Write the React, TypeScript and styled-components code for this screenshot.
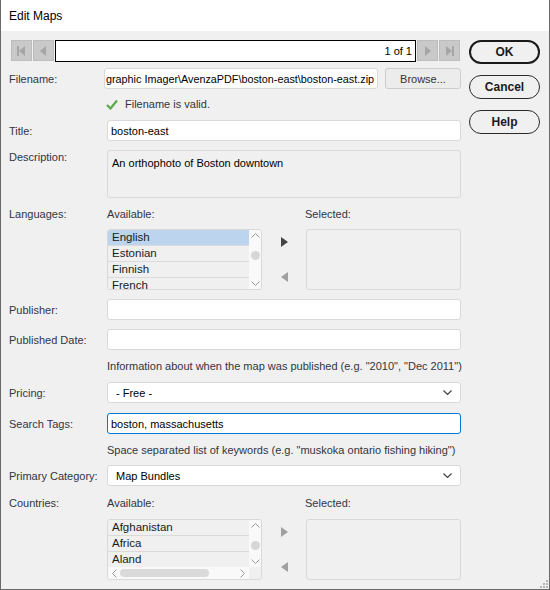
import React from "react";
import styled, { createGlobalStyle } from "styled-components";

const GlobalStyle = createGlobalStyle`
  * { box-sizing: border-box; }
  body {
    margin: 0;
    font-family: "Liberation Sans", Arial, sans-serif;
    font-size: 11px;
    color: #333;
  }
`;

const Window = styled.div`
  position: relative;
  width: 550px;
  height: 590px;
  background: #f0f0f0;
  border: 1px solid #6a6a6a;
  border-top: none;
  display: flex;
  flex-direction: column;
`;

const TitleBar = styled.div`
  height: 31px;
  background: #fff;
  display: flex;
  align-items: center;
  padding-left: 8px;
  font-size: 12px;
  color: #000;
`;

const Body = styled.div`
  display: flex;
  padding-top: 9px;
`;

const Main = styled.div`
  width: 460px;
  padding-left: 8px;
  display: flex;
  flex-direction: column;
`;

const Side = styled.div`
  width: 71px;
  margin-left: 8px;
  display: flex;
  flex-direction: column;
  gap: 11px;
`;

const DialogButton = styled.button<{ $default?: boolean }>`
  height: 24px;
  width: 100%;
  border-radius: 12px;
  background: #f0f0f0;
  border: ${(p) => (p.$default ? "2px solid #1a1a1a" : "1px solid #2a2a2a")};
  font-family: "Liberation Sans", Arial, sans-serif;
  font-weight: bold;
  font-size: 12px;
  color: #1a1a1a;
  padding: 0;
`;

const NavRow = styled.div`
  display: flex;
  margin-left: 2px;
  margin-right: 1px;
  height: 22px;
`;

const NavButton = styled.div`
  width: 21px;
  height: 21px;
  background: #c9c9c9;
  border: 1px solid #bdbdbd;
  margin-right: 1px;
  display: flex;
  align-items: center;
  justify-content: center;
  &:last-child {
    margin-right: 0;
  }
`;

const Counter = styled.div`
  flex: 1;
  height: 22px;
  background: #fff;
  border: 1px solid #000;
  margin-right: 1px;
  display: flex;
  align-items: center;
  justify-content: flex-end;
  padding-right: 3px;
  color: #000;
`;

const Row = styled.div<{ $mt: number; $top?: boolean }>`
  display: flex;
  align-items: ${(p) => (p.$top ? "flex-start" : "center")};
  margin-top: ${(p) => p.$mt}px;
`;

const Label = styled.div`
  width: 98px;
  flex-shrink: 0;
  line-height: 14px;
  color: #33343f;
`;

const Hint = styled.div`
  line-height: 14px;
  color: #33343f;
  white-space: nowrap;
`;

const Input = styled.div<{ $focus?: boolean }>`
  width: 354px;
  height: 21px;
  background: #fff;
  border: 1px solid ${(p) => (p.$focus ? "#0078d7" : "#d9d9d9")};
  border-radius: 3px;
  display: flex;
  align-items: center;
  padding-left: 3px;
  color: #000;
  white-space: nowrap;
  overflow: hidden;
`;

const FileInput = styled(Input)`
  width: 274px;
  margin-left: -3px;
  padding-left: 1px;
  font-size: 10.8px;
`;

const BrowseButton = styled.div`
  width: 76px;
  height: 21px;
  margin-left: 7px;
  background: #ececec;
  border: 1px solid #cdcdcd;
  border-radius: 3px;
  display: flex;
  align-items: center;
  justify-content: center;
  color: #333;
`;

const TextArea = styled.div`
  width: 354px;
  height: 48px;
  background: #f0f0f0;
  border: 1px solid #d9d9d9;
  border-radius: 3px;
  padding: 5px 4px;
  line-height: 14px;
  color: #000;
`;

const Select = styled(Input)`
  justify-content: space-between;
  padding: 0 8px;
`;

const ValidRow = styled.div`
  display: flex;
  align-items: center;
  height: 16px;
  margin-top: 7px;
  padding-left: 97px;
  gap: 7px;
  color: #33343f;
`;

const AvailableHead = styled.div`
  width: 198px;
  line-height: 14px;
  color: #33343f;
`;

const ListBox = styled.div<{ $hscroll?: boolean }>`
  width: 155px;
  height: 61px;
  border: 1px solid #d9d9d9;
  border-radius: 3px;
  background: #f0f0f0;
  overflow: hidden;
  display: grid;
  grid-template-columns: 1fr 12px;
  grid-template-rows: ${(p) => (p.$hscroll ? "1fr 12px" : "1fr")};
`;

const Items = styled.div`
  overflow: hidden;
`;

const Item = styled.div<{ $selected?: boolean }>`
  height: 16px;
  line-height: 15px;
  padding-left: 4px;
  color: #1a1a1a;
  background: ${(p) => (p.$selected ? "#bcd4ee" : "#f0f0f0")};
  border-bottom: 1px solid #dadada;
  font-size: 11.5px;
`;

const VScroll = styled.div`
  background: #f9f9f9;
  display: flex;
  flex-direction: column;
  align-items: center;
  padding-top: 3px;
`;

const Thumb = styled.div`
  width: 9px;
  height: 9px;
  border-radius: 50%;
  background: #d6d6d6;
  margin-top: 13px;
`;

const ScrollEnd = styled.div`
  margin-top: auto;
  padding-bottom: 3px;
  display: flex;
`;

const HScroll = styled.div`
  background: #f9f9f9;
  display: flex;
  align-items: center;
  padding: 0 4px;
`;

const HThumb = styled.div`
  width: 89px;
  height: 8px;
  border-radius: 4px;
  background: #dadada;
  margin-left: 3px;
`;

const HEnd = styled.div`
  margin-left: auto;
  display: flex;
`;

const Corner = styled.div`
  background: #f0f0f0;
`;

const ArrowCol = styled.div`
  width: 44px;
  height: 61px;
  display: flex;
  flex-direction: column;
  align-items: center;
  padding-top: 8px;
  gap: 25px;
`;

const SelectedBox = styled.div`
  width: 155px;
  height: 61px;
  border: 1px solid #d9d9d9;
  border-radius: 3px;
  background: #f0f0f0;
`;

const Grip = styled.svg`
  position: absolute;
  right: 1px;
  bottom: 1px;
`;

const Tri = ({ dir, color }: { dir: "l" | "r"; color: string }) => (
  <svg width="7" height="10" viewBox="0 0 7 10">
    <polygon points={dir === "r" ? "0,0 7,5 0,10" : "7,0 0,5 7,10"} fill={color} />
  </svg>
);

const NavIcon = ({ kind }: { kind: "first" | "prev" | "next" | "last" }) => (
  <svg width="11" height="10" viewBox="0 0 11 10">
    {kind === "first" && (
      <>
        <rect x="1" y="0" width="2" height="10" fill="#a6a6a6" />
        <polygon points="9,0 3,5 9,10" fill="#a6a6a6" />
      </>
    )}
    {kind === "prev" && <polygon points="8,0 2,5 8,10" fill="#a6a6a6" />}
    {kind === "next" && <polygon points="3,0 9,5 3,10" fill="#a6a6a6" />}
    {kind === "last" && (
      <>
        <polygon points="2,0 8,5 2,10" fill="#a6a6a6" />
        <rect x="8" y="0" width="2" height="10" fill="#a6a6a6" />
      </>
    )}
  </svg>
);

const Chevron = ({ up }: { up?: boolean }) => (
  <svg width="9" height="5" viewBox="0 0 9 5">
    <polyline
      points={up ? "0.5,4.5 4.5,0.5 8.5,4.5" : "0.5,0.5 4.5,4.5 8.5,0.5"}
      fill="none"
      stroke="#9a9a9a"
      strokeWidth="1"
    />
  </svg>
);

const SideChevron = ({ right }: { right?: boolean }) => (
  <svg width="5" height="9" viewBox="0 0 5 9">
    <polyline
      points={right ? "0.5,0.5 4.5,4.5 0.5,8.5" : "4.5,0.5 0.5,4.5 4.5,8.5"}
      fill="none"
      stroke="#9a9a9a"
      strokeWidth="1"
    />
  </svg>
);

const DropChevron = () => (
  <svg width="9" height="5" viewBox="0 0 9 5">
    <polyline points="0.5,0.5 4.5,4.5 8.5,0.5" fill="none" stroke="#444" strokeWidth="1.2" />
  </svg>
);

function PickList({
  items,
  selected,
  hscroll,
}: {
  items: string[];
  selected?: string;
  hscroll?: boolean;
}) {
  return (
    <ListBox $hscroll={hscroll}>
      <Items>
        {items.map((it) => (
          <Item key={it} $selected={it === selected}>
            {it}
          </Item>
        ))}
      </Items>
      <VScroll>
        <Chevron up />
        <Thumb />
        <ScrollEnd>
          <Chevron />
        </ScrollEnd>
      </VScroll>
      {hscroll && (
        <>
          <HScroll>
            <SideChevron />
            <HThumb />
            <HEnd>
              <SideChevron right />
            </HEnd>
          </HScroll>
          <Corner />
        </>
      )}
    </ListBox>
  );
}

export default function App() {
  return (
    <Window>
      <GlobalStyle />
      <TitleBar>Edit Maps</TitleBar>
      <Body>
        <Main>
          <NavRow>
            <NavButton>
              <NavIcon kind="first" />
            </NavButton>
            <NavButton>
              <NavIcon kind="prev" />
            </NavButton>
            <Counter>1 of 1</Counter>
            <NavButton>
              <NavIcon kind="next" />
            </NavButton>
            <NavButton>
              <NavIcon kind="last" />
            </NavButton>
          </NavRow>

          <Row $mt={6}>
            <Label>Filename:</Label>
            <FileInput>graphic Imager\AvenzaPDF\boston-east\boston-east.zip</FileInput>
            <BrowseButton>Browse...</BrowseButton>
          </Row>

          <ValidRow>
            <svg width="12" height="11" viewBox="0 0 12 11">
              <polyline
                points="1,6 4.5,9.5 11,1.5"
                fill="none"
                stroke="#5aa846"
                strokeWidth="2.2"
              />
            </svg>
            <span>Filename is valid.</span>
          </ValidRow>

          <Row $mt={8}>
            <Label>Title:</Label>
            <Input>boston-east</Input>
          </Row>

          <Row $mt={9} $top>
            <Label>Description:</Label>
            <TextArea>An orthophoto of Boston downtown</TextArea>
          </Row>

          <Row $mt={9}>
            <Label>Languages:</Label>
            <AvailableHead>Available:</AvailableHead>
            <Hint>Selected:</Hint>
          </Row>
          <Row $mt={8} $top>
            <Label />
            <PickList items={["English", "Estonian", "Finnish", "French"]} selected="English" />
            <ArrowCol>
              <Tri dir="r" color="#444" />
              <Tri dir="l" color="#a0a0a0" />
            </ArrowCol>
            <SelectedBox />
          </Row>

          <Row $mt={9}>
            <Label>Publisher:</Label>
            <Input />
          </Row>
          <Row $mt={9}>
            <Label>Published Date:</Label>
            <Input />
          </Row>
          <Row $mt={9}>
            <Label />
            <Hint>Information about when the map was published (e.g. "2010", "Dec 2011")</Hint>
          </Row>

          <Row $mt={9}>
            <Label>Pricing:</Label>
            <Select>
              <span>- Free -</span>
              <DropChevron />
            </Select>
          </Row>
          <Row $mt={10}>
            <Label>Search Tags:</Label>
            <Input $focus>boston, massachusetts</Input>
          </Row>
          <Row $mt={9}>
            <Label />
            <Hint>Space separated list of keywords (e.g. "muskoka ontario fishing hiking")</Hint>
          </Row>
          <Row $mt={8}>
            <Label>Primary Category:</Label>
            <Select>
              <span>Map Bundles</span>
              <DropChevron />
            </Select>
          </Row>

          <Row $mt={10}>
            <Label>Countries:</Label>
            <AvailableHead>Available:</AvailableHead>
            <Hint>Selected:</Hint>
          </Row>
          <Row $mt={9} $top>
            <Label />
            <PickList items={["Afghanistan", "Africa", "Aland"]} hscroll />
            <ArrowCol>
              <Tri dir="r" color="#a0a0a0" />
              <Tri dir="l" color="#a0a0a0" />
            </ArrowCol>
            <SelectedBox />
          </Row>
        </Main>

        <Side>
          <DialogButton $default>OK</DialogButton>
          <DialogButton>Cancel</DialogButton>
          <DialogButton>Help</DialogButton>
        </Side>
      </Body>
      <Grip width="8" height="8" viewBox="0 0 8 8">
        {[
          [6, 0],
          [3, 3],
          [6, 3],
          [0, 6],
          [3, 6],
          [6, 6],
        ].map(([x, y]) => (
          <rect key={`${x}-${y}`} x={x} y={y} width="2" height="2" fill="#b4b4b4" />
        ))}
      </Grip>
    </Window>
  );
}
